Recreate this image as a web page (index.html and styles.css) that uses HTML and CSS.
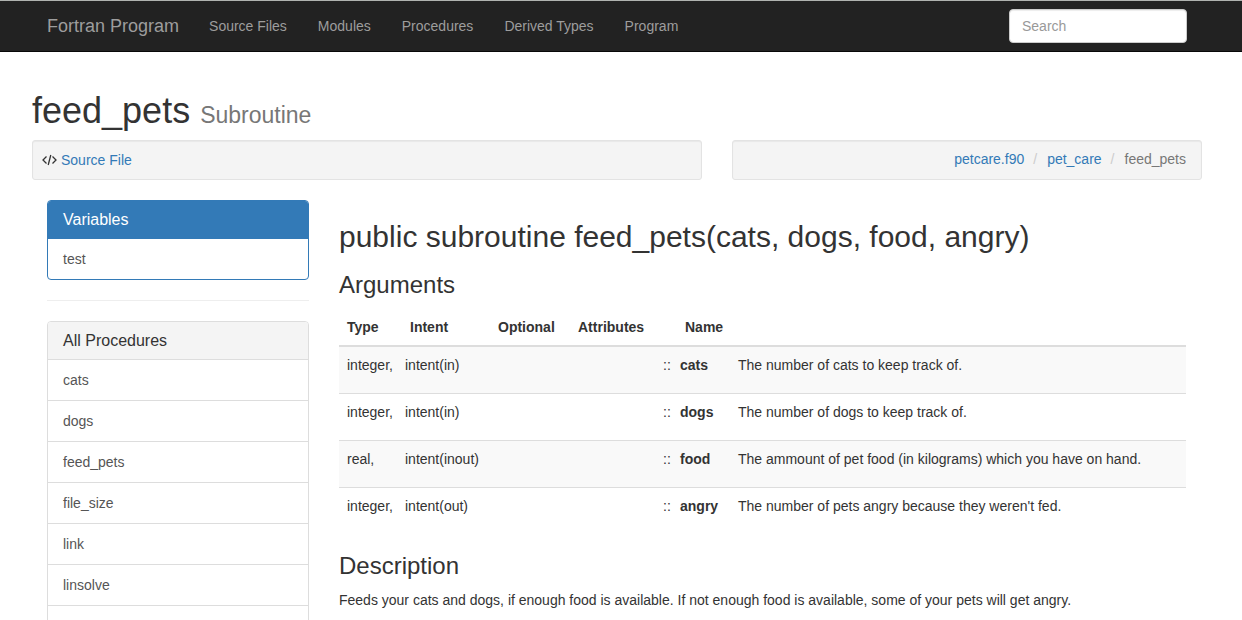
FILE: index.html
```html
<!DOCTYPE html>
<html lang="en">
<head>
<meta charset="utf-8">
<title>feed_pets – Fortran Program</title>
<link rel="stylesheet" href="styles.css">
</head>
<body>
<header class="navbar">
  <div class="container navbar-inner">
    <a class="brand" href="#">Fortran Program</a>
    <nav class="nav">
      <a href="#">Source Files</a>
      <a href="#">Modules</a>
      <a href="#">Procedures</a>
      <a href="#">Derived Types</a>
      <a href="#">Program</a>
    </nav>
    <form class="search" role="search">
      <input class="search-input" type="text" placeholder="Search" aria-label="Search">
    </form>
  </div>
</header>
<div class="container page">
  <h1>feed_pets <small>Subroutine</small></h1>
  <div class="wells">
    <div class="well">
      <svg class="icon-code" viewBox="0 0 15 12" aria-hidden="true"><path d="M4.500 2.500 1 6l3.500 3.500M10.500 2.500 14 6l-3.500 3.500M8.800 1 6.200 11"/></svg>
      <a href="#">Source File</a>
    </div>
    <ol class="well breadcrumb">
      <li><a href="#">petcare.f90</a></li>
      <li><a href="#">pet_care</a></li>
      <li>feed_pets</li>
    </ol>
  </div>
  <div class="columns">
    <aside class="sidebar">
      <section class="panel panel-primary">
        <h3 class="panel-title">Variables</h3>
        <a class="item" href="#">test</a>
      </section>
      <hr>
      <section class="panel">
        <h3 class="panel-title">All Procedures</h3>
        <a class="item" href="#">cats</a>
        <a class="item" href="#">dogs</a>
        <a class="item" href="#">feed_pets</a>
        <a class="item" href="#">file_size</a>
        <a class="item" href="#">link</a>
        <a class="item" href="#">linsolve</a>
        <div class="item"></div>
      </section>
    </aside>
    <main class="content">
      <h2>public subroutine feed_pets(cats, dogs, food, angry)</h2>
      <h3>Arguments</h3>
      <table class="varlist">
        <colgroup>
          <col class="col-type"><col class="col-intent"><col class="col-optional"><col class="col-attributes"><col class="col-sep"><col class="col-name"><col>
        </colgroup>
        <thead>
          <tr><th>Type</th><th>Intent</th><th>Optional</th><th>Attributes</th><th></th><th>Name</th><th></th></tr>
        </thead>
        <tbody>
          <tr><td>integer,</td><td>intent(in)</td><td></td><td></td><td>::</td><td><strong>cats</strong></td><td><p>The number of cats to keep track of.</p></td></tr>
          <tr><td>integer,</td><td>intent(in)</td><td></td><td></td><td>::</td><td><strong>dogs</strong></td><td><p>The number of dogs to keep track of.</p></td></tr>
          <tr><td>real,</td><td>intent(inout)</td><td></td><td></td><td>::</td><td><strong>food</strong></td><td><p>The ammount of pet food (in kilograms) which you have on hand.</p></td></tr>
          <tr><td>integer,</td><td>intent(out)</td><td></td><td></td><td>::</td><td><strong>angry</strong></td><td><p>The number of pets angry because they weren't fed.</p></td></tr>
        </tbody>
      </table>
      <h3>Description</h3>
      <p>Feeds your cats and dogs, if enough food is available. If not enough food is available, some of your pets will get angry.</p>
    </main>
  </div>
</div>
</body>
</html>
```

FILE: styles.css
```css
* { box-sizing: border-box; }
html { scrollbar-width: none; }
body {
  margin: 0;
  padding-right: 8px;
  color: #333;
  background: #fff;
  font: 14px/20px "Liberation Sans", Arial, sans-serif;
}
a { color: #337ab7; text-decoration: none; }
p { margin: 0 0 10px; }
h1, h2, h3 { font-weight: 400; }
h1 { margin: 0 0 9px; font-size: 36px; line-height: 40px; }
h1 small { color: #777; font-size: 23px; line-height: 1; }
h2 { margin: 20px 0; font-size: 30px; line-height: 33px; }
h3 { margin: 20px 0 12px; font-size: 24px; line-height: 24px; }
.container { max-width: 1170px; margin: 0 auto; }

.navbar {
  margin-right: -8px;
  padding-right: 8px;
  background: #222;
  border-top: 1px solid #b0b3b0;
  border-bottom: 1px solid #080808;
}
.navbar-inner { display: flex; align-items: center; min-height: 50px; }
.brand { padding: 0 15px; color: #9d9d9d; font-size: 18px; }
.nav { display: flex; gap: 1px; }
.nav a { padding: 15px; color: #9d9d9d; }
.search { margin-left: auto; padding-right: 15px; }
.search-input {
  display: block;
  width: 178px;
  height: 34px;
  padding: 6px 12px;
  color: #555;
  font: inherit;
  background: #fff;
  border: 1px solid #ccc;
  border-radius: 4px;
  box-shadow: inset 0 1px 1px rgba(0, 0, 0, .075);
}
.search-input::placeholder { color: #999; opacity: 1; }

.page { padding-top: 39px; }
.wells { display: grid; grid-template-columns: 67fr 47fr; gap: 30px; margin-bottom: 20px; }
.well {
  display: flex;
  align-items: center;
  gap: 4px;
  margin: 0;
  padding: 9px;
  background: #f4f4f4;
  border: 1px solid #e3e3e3;
  border-radius: 3px;
  box-shadow: inset 0 1px 1px rgba(0, 0, 0, .05);
}
.icon-code { width: 15px; height: 12px; fill: none; stroke: #333; stroke-width: 1.3; }
.breadcrumb { justify-content: flex-end; gap: 0; padding: 8px 15px 10px; color: #777; list-style: none; }
.breadcrumb li + li::before { content: "/"; padding: 0 10px 0 9px; color: #ccc; }

.columns { display: grid; grid-template-columns: 262px 1fr; gap: 30px; padding: 0 16px 0 15px; }
.panel { border: 1px solid #ddd; border-radius: 4px; overflow: hidden; }
.panel-title {
  margin: 0;
  padding: 10px 15px;
  font-size: 16px;
  line-height: 17px;
  background: #f4f4f4;
  border-bottom: 1px solid #ddd;
}
.panel-primary { border-color: #337ab7; }
.panel-primary .panel-title { color: #fff; background: #337ab7; border-color: #337ab7; }
.item { display: block; min-height: 40px; padding: 10px 15px; color: #555; }
.item + .item { border-top: 1px solid #ddd; }
hr { margin: 20px 0; border: 0; border-top: 1px solid #eee; }

.varlist { width: 100%; margin-bottom: 20px; table-layout: fixed; border-collapse: collapse; }
.col-type { width: 61px; }
.col-intent { width: 88px; }
.col-optional { width: 80px; }
.col-attributes { width: 90px; }
.col-sep { width: 17px; }
.col-name { width: 58px; }
.varlist th { padding: 8px 0 8px 10px; text-align: left; border-bottom: 2px solid #ddd; }
.varlist td { padding: 8px 0 8px 5px; vertical-align: top; }
.varlist th:first-child, .varlist td:first-child { padding-left: 8px; }
.varlist tbody tr + tr { border-top: 1px solid #ddd; }
.varlist tbody tr:nth-child(odd) { background: #f9f9f9; }
```
